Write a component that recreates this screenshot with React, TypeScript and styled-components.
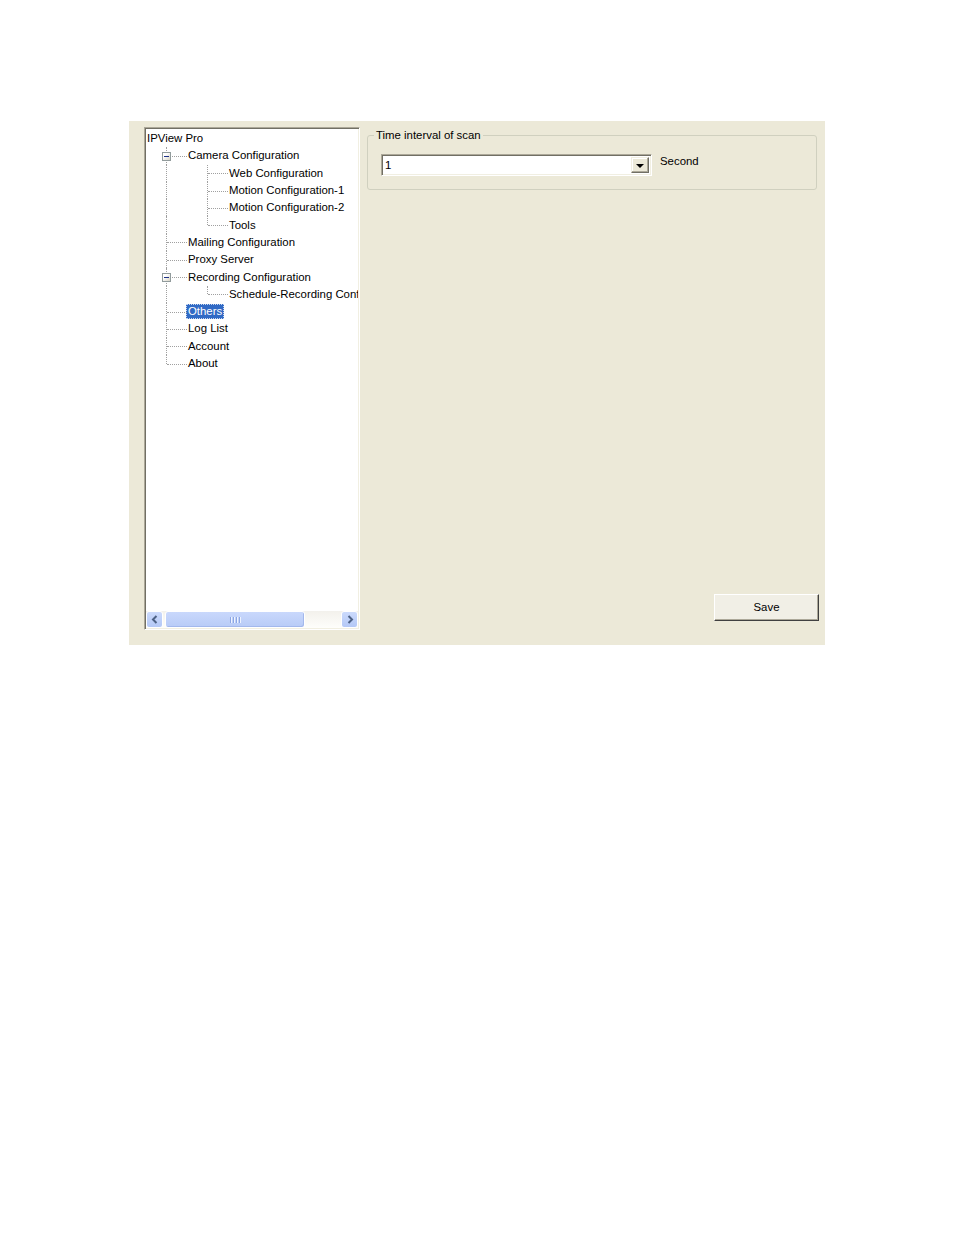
import React from "react";
import styled, { createGlobalStyle } from "styled-components";

const GlobalStyle = createGlobalStyle`
  body {
    margin: 0;
    background: #fff;
    font-family: "Liberation Sans", Arial, sans-serif;
    font-size: 11.4px;
    color: #000;
  }
`;

const Page = styled.div`
  padding: 121px 0 0 129px;
`;

const Panel = styled.div`
  box-sizing: border-box;
  width: 696px;
  height: 524px;
  background: #ece9d8;
  padding: 6px 6px 15px 15px;
  display: flex;
  gap: 7px;
`;

const TreeBox = styled.div`
  box-sizing: border-box;
  width: 216px;
  height: 503px;
  background: #fff;
  border-style: solid;
  border-width: 1px;
  border-color: #aca899 #fff #fff #aca899;
  box-shadow: inset 1px 1px #716f64, inset -1px -1px #f1efe2;
  padding: 1px;
  display: flex;
  flex-direction: column;
`;

const TreeList = styled.div`
  flex: 1;
  overflow: hidden;
  display: flex;
  flex-direction: column;
  padding-top: 1px;
`;

const Row = styled.div`
  height: 17.3px;
  display: flex;
  align-items: center;
  white-space: nowrap;
  flex-shrink: 0;
`;

const Guide = styled.div<{ $on: boolean }>`
  position: relative;
  width: 41px;
  height: 100%;
  flex-shrink: 0;
  &::before {
    content: "";
    display: ${(p) => (p.$on ? "block" : "none")};
    position: absolute;
    left: 20px;
    top: 0;
    bottom: 0;
    border-left: 1px dotted #a0a0a0;
  }
`;

const Connector = styled.div<{ $last: boolean }>`
  position: relative;
  width: 41px;
  height: 100%;
  flex-shrink: 0;
  &::before {
    content: "";
    position: absolute;
    left: 20px;
    top: 0;
    height: ${(p) => (p.$last ? "50%" : "100%")};
    border-left: 1px dotted #a0a0a0;
  }
  &::after {
    content: "";
    position: absolute;
    left: 21px;
    right: 0;
    top: 50%;
    border-top: 1px dotted #a0a0a0;
  }
`;

const Expander = styled.span`
  position: absolute;
  z-index: 1;
  left: 16px;
  top: calc(50% - 4px);
  box-sizing: border-box;
  width: 9px;
  height: 9px;
  border: 1px solid #919b9c;
  background: linear-gradient(135deg, #fff 30%, #d8d4c6);
  &::after {
    content: "";
    position: absolute;
    left: 1px;
    top: 3px;
    width: 5px;
    height: 1px;
    background: #1e3287;
  }
`;

const Label = styled.span<{ $selected?: boolean }>`
  margin-left: -1px;
  padding: 0 2px;
  line-height: 15px;
  height: 15px;
  box-sizing: border-box;
  color: ${(p) => (p.$selected ? "#fff" : "#000")};
  background: ${(p) => (p.$selected ? "#316ac5" : "transparent")};
  outline: ${(p) => (p.$selected ? "1px dotted #c8d8f0" : "none")};
  outline-offset: -1px;
`;

const HScroll = styled.div`
  height: 17px;
  display: flex;
  align-items: stretch;
  background: linear-gradient(#f3f1ec, #fefefb);
  flex-shrink: 0;
`;

const ArrowBtn = styled.div`
  box-sizing: border-box;
  width: 17px;
  border: 1px solid #fff;
  border-radius: 3px;
  background: linear-gradient(#cbdafc, #b4c8f6);
  display: flex;
  align-items: center;
  justify-content: center;
`;

const Track = styled.div`
  flex: 1;
  padding: 0 36px 0 2px;
  display: flex;
`;

const Thumb = styled.div`
  box-sizing: border-box;
  width: 140px;
  border: 1px solid #fff;
  border-radius: 3px;
  background: linear-gradient(#c9d8fc, #b8cbf7);
  box-shadow: inset -1px -1px #a3b8ec;
  display: flex;
  align-items: center;
  justify-content: center;
  gap: 1px;
`;

const Grip = styled.span`
  width: 1px;
  height: 6px;
  background: #8ca6e4;
  border-right: 1px solid #eef3ff;
`;

const RightColumn = styled.div`
  flex: 1;
  display: flex;
  flex-direction: column;
`;

const GroupBox = styled.fieldset`
  margin: 1px 2px 0 0;
  padding: 0;
  border: 1px solid #d0d0bf;
  border-radius: 3px;
  min-width: 0;
`;

const Legend = styled.legend`
  margin-left: 6px;
  padding: 0 2px;
  line-height: 14px;
`;

const GroupBody = styled.div`
  display: flex;
  align-items: flex-start;
  padding: 12px 0 13px 13px;
`;

const Combo = styled.div`
  box-sizing: border-box;
  width: 271px;
  height: 22px;
  background: #fff;
  border-style: solid;
  border-width: 1px;
  border-color: #aca899 #fff #fff #aca899;
  box-shadow: inset 1px 1px #716f64, inset -1px -1px #f1efe2;
  padding: 2px;
  display: flex;
  align-items: center;
`;

const ComboText = styled.span`
  flex: 1;
  padding-left: 1px;
`;

const DropBtn = styled.div`
  box-sizing: border-box;
  width: 18px;
  height: 16px;
  background: #ece9d8;
  border-style: solid;
  border-width: 1px;
  border-color: #f1efe2 #716f64 #716f64 #f1efe2;
  box-shadow: inset -1px -1px #aca899, inset 1px 1px #fff;
  display: flex;
  align-items: center;
  justify-content: center;
  &::after {
    content: "";
    margin-top: 1px;
    border-left: 4px solid transparent;
    border-right: 4px solid transparent;
    border-top: 4px solid #000;
  }
`;

const Unit = styled.span`
  margin: 0 0 0 8px;
  line-height: 14px;
`;

const SaveButton = styled.button`
  margin-top: auto;
  margin-bottom: 9px;
  align-self: flex-end;
  box-sizing: border-box;
  width: 105px;
  height: 27px;
  font-family: inherit;
  font-size: 11.4px;
  color: #000;
  background: #f1efe6;
  border-style: solid;
  border-width: 1px;
  border-color: #fff #404040 #404040 #fff;
  box-shadow: inset -1px -1px #aca899;
  padding: 0 0 1px;
`;

type Node = {
  label: string;
  level: number;
  last?: boolean;
  expander?: boolean;
  selected?: boolean;
};

const nodes: Node[] = [
  { label: "IPView Pro", level: 0 },
  { label: "Camera Configuration", level: 1, expander: true },
  { label: "Web Configuration", level: 2 },
  { label: "Motion Configuration-1", level: 2 },
  { label: "Motion Configuration-2", level: 2 },
  { label: "Tools", level: 2, last: true },
  { label: "Mailing Configuration", level: 1 },
  { label: "Proxy Server", level: 1 },
  { label: "Recording Configuration", level: 1, expander: true },
  { label: "Schedule-Recording Configuration", level: 2, last: true },
  { label: "Others", level: 1, selected: true },
  { label: "Log List", level: 1 },
  { label: "Account", level: 1 },
  { label: "About", level: 1, last: true },
];

const Chevron: React.FC<{ dir: "left" | "right" }> = ({ dir }) => (
  <svg width="8" height="9" viewBox="0 0 8 9">
    <polyline
      points={dir === "left" ? "5.5,1 2,4.5 5.5,8" : "2.5,1 6,4.5 2.5,8"}
      fill="none"
      stroke="#4d6185"
      strokeWidth="2"
    />
  </svg>
);

const App: React.FC = () => {
  return (
    <Page>
      <GlobalStyle />
      <Panel>
        <TreeBox>
          <TreeList>
            {nodes.map((n) => (
              <Row key={n.label}>
                {n.level === 2 && <Guide $on={true} />}
                {n.level >= 1 && (
                  <Connector $last={!!n.last}>
                    {n.expander && <Expander />}
                  </Connector>
                )}
                <Label $selected={n.selected}>{n.label}</Label>
              </Row>
            ))}
          </TreeList>
          <HScroll>
            <ArrowBtn>
              <Chevron dir="left" />
            </ArrowBtn>
            <Track>
              <Thumb>
                <Grip />
                <Grip />
                <Grip />
                <Grip />
              </Thumb>
            </Track>
            <ArrowBtn>
              <Chevron dir="right" />
            </ArrowBtn>
          </HScroll>
        </TreeBox>
        <RightColumn>
          <GroupBox>
            <Legend>Time interval of scan</Legend>
            <GroupBody>
              <Combo>
                <ComboText>1</ComboText>
                <DropBtn />
              </Combo>
              <Unit>Second</Unit>
            </GroupBody>
          </GroupBox>
          <SaveButton>Save</SaveButton>
        </RightColumn>
      </Panel>
    </Page>
  );
};

export default App;
